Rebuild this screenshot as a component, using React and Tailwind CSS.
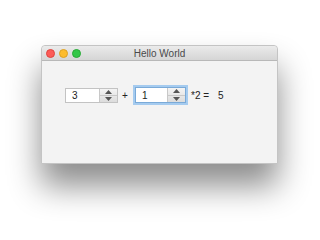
export default function App() {
  const Arrows = () => (
    <div className="flex flex-col w-[18px] h-full border-l border-[#c8c8c8] bg-gradient-to-b from-[#f4f4f4] to-[#dcdcdc]">
      <div className="flex-1 flex items-center justify-center border-b border-[#c8c8c8]">
        <svg width="7" height="4" viewBox="0 0 7 4"><path d="M0 4 L3.5 0 L7 4 Z" fill="#555" /></svg>
      </div>
      <div className="flex-1 flex items-center justify-center">
        <svg width="7" height="4" viewBox="0 0 7 4"><path d="M0 0 L3.5 4 L7 0 Z" fill="#555" /></svg>
      </div>
    </div>
  );
  return (
    <div className="w-[320px] h-[240px] bg-white overflow-hidden" style={{ fontFamily: '"Liberation Sans", Arial, sans-serif' }}>
      <div className="ml-[41px] pt-[45px]">
        <div className="w-[237px] h-[119px] flex flex-col bg-[#f3f3f3] border border-[#c4c4c4] rounded-t-[4px] shadow-[0_22px_32px_rgba(0,0,0,0.45)]">
          <div className="h-[15px] flex items-center relative rounded-t-[4px] bg-gradient-to-b from-[#ebebeb] to-[#d5d5d5] border-b border-[#b8b8b8]">
            <div className="flex gap-[4px] pl-[4px]">
              <div className="w-[9px] h-[9px] rounded-full bg-[#fc5b57] border border-[#e0443e]" />
              <div className="w-[9px] h-[9px] rounded-full bg-[#fdbc2e] border border-[#dea123]" />
              <div className="w-[9px] h-[9px] rounded-full bg-[#33c748] border border-[#27aa35]" />
            </div>
            <div className="absolute inset-0 flex items-center justify-center text-[10px] text-[#4a4a4a]">Hello World</div>
          </div>
          <div className="flex items-center pl-[23px] pt-[26px] text-[10px] text-[#222]">
            <div className="flex h-[15px] w-[53px] border border-[#c3c3c3] bg-white">
              <div className="flex-1 flex items-center pl-[6px]">3</div>
              <Arrows />
            </div>
            <div className="ml-[2px] w-[10px] text-center">+</div>
            <div className="ml-[5px] flex h-[16px] w-[51px] border border-[#7aaad8] bg-white ring-2 ring-[#a5cbef]">
              <div className="flex-1 flex items-center pl-[6px]">1</div>
              <Arrows />
            </div>
            <div className="ml-[5px]">*2 =</div>
            <div className="ml-[9px]">5</div>
          </div>
        </div>
      </div>
    </div>
  );
}
